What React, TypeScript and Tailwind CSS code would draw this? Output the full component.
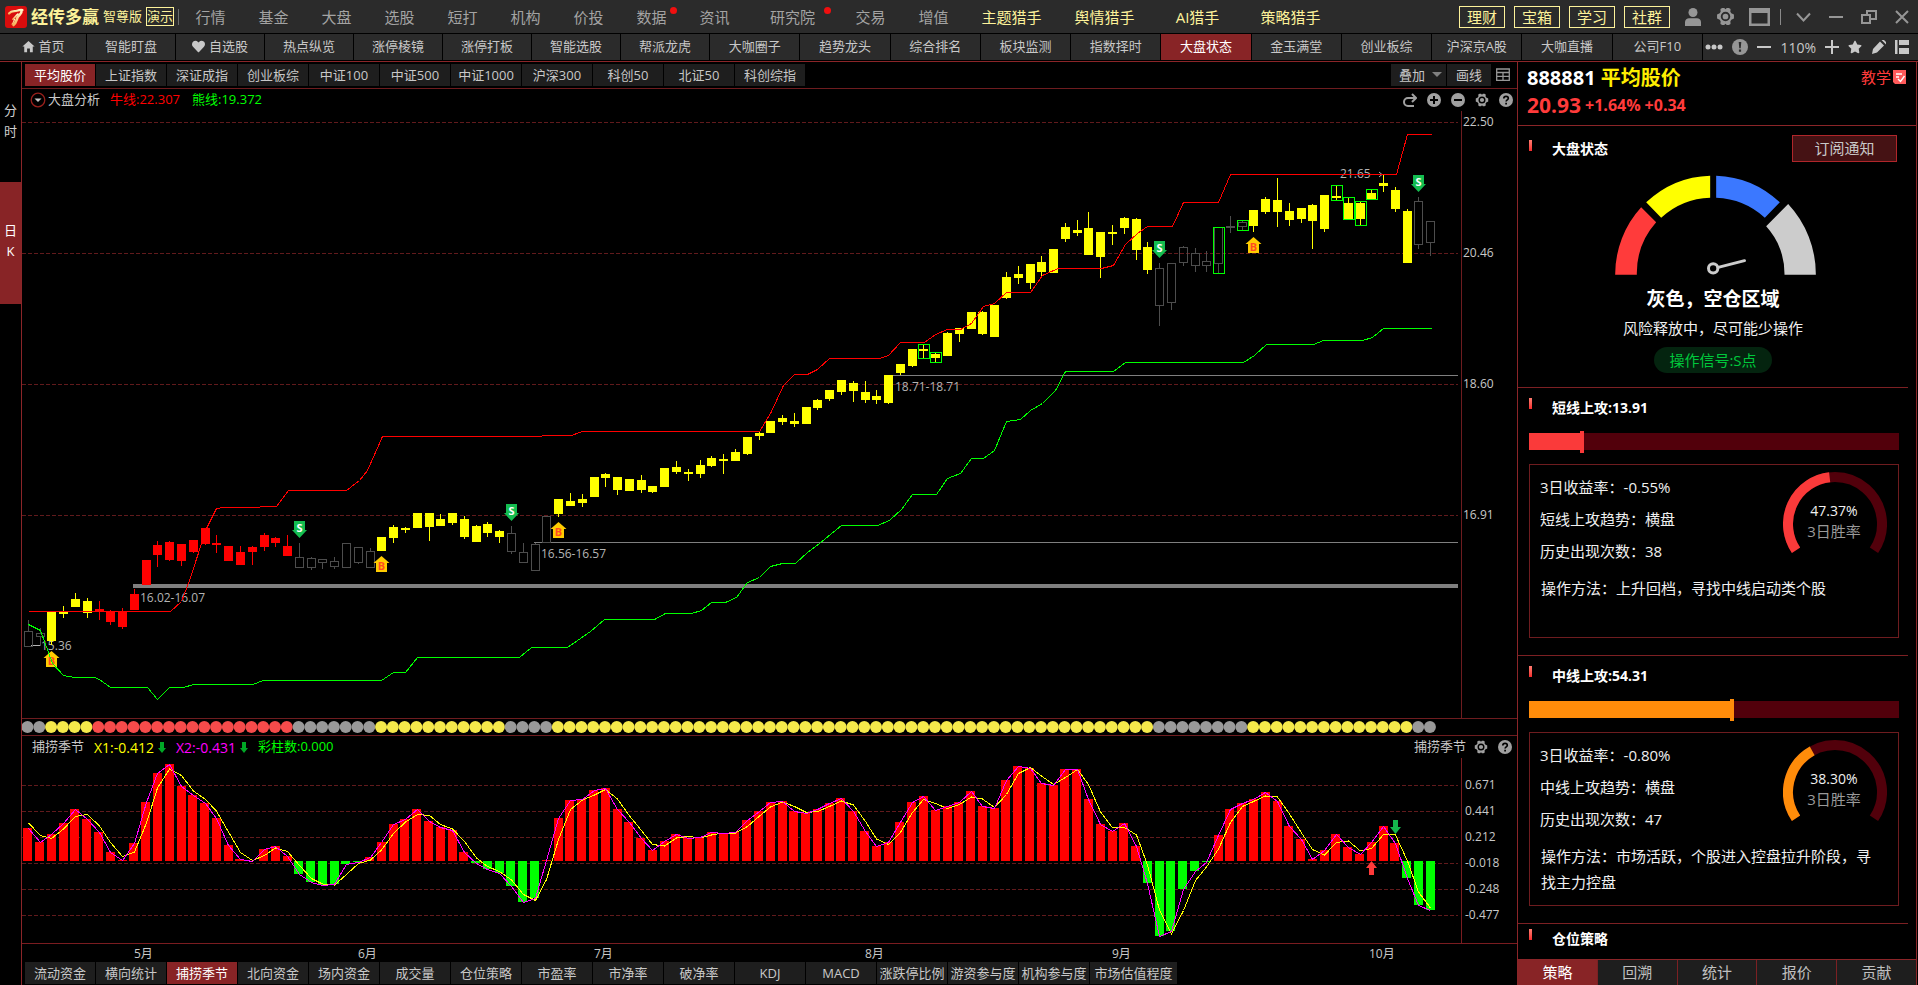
import React from 'react';
import clsx from 'clsx';
import { FaHeart, FaStar } from 'react-icons/fa';
import { IoMdHome } from 'react-icons/io';

const MENU: { label: string; dot?: boolean; wide?: boolean; hot?: boolean }[] = [
  { label: '行情' },
  { label: '基金' },
  { label: '大盘' },
  { label: '选股' },
  { label: '短打' },
  { label: '机构' },
  { label: '价投' },
  { label: '数据', dot: true },
  { label: '资讯' },
  { label: '研究院', dot: true, wide: true },
  { label: '交易' },
  { label: '增值' },
  { label: '主题猎手', wide: true, hot: true },
  { label: '舆情猎手', wide: true, hot: true },
  { label: 'AI猎手', wide: true, hot: true },
  { label: '策略猎手', wide: true, hot: true },
];

const SHORTCUTS = [
  '智能盯盘', '自选股', '热点纵览', '涨停棱镜', '涨停打板', '智能选股', '帮派龙虎', '大咖圈子', '趋势龙头',
  '综合排名', '板块监测', '指数择时', '大盘状态', '金玉满堂', '创业板综', '沪深京A股', '大咖直播', '公司F10',
];

const INDEX_TABS = [
  '平均股价', '上证指数', '深证成指', '创业板综', '中证100', '中证500', '中证1000', '沪深300', '科创50', '北证50', '科创综指',
];

const INDICATOR_TABS = [
  '流动资金', '横向统计', '捕捞季节', '北向资金', '场内资金', '成交量', '仓位策略', '市盈率', '市净率', '破净率',
  'KDJ', 'MACD', '涨跌停比例', '游资参与度', '机构参与度', '市场估值程度',
];

const PANEL_TABS = ['策略', '回溯', '统计', '报价', '贡献'];

/* ---------- chart data ---------- */

type State = 'g' | 'y' | 'r';

// high, body top, body bottom, low
const CANDLES: [number, number, number, number][] = [
  [620, 631, 647, 647], [628, 633, 637, 646], [612, 612, 641, 645], [606, 612, 614, 618], [593, 599, 607, 607],
  [598, 601, 613, 618], [601, 609, 612, 620], [610, 611, 622, 625], [608, 611, 627, 629], [589, 594, 610, 610],
  [560, 560, 585, 585], [541, 545, 555, 567], [541, 542, 560, 561], [544, 544, 561, 566], [540, 540, 552, 553],
  [528, 528, 544, 545], [535, 543, 545, 553], [546, 546, 561, 561], [546, 552, 565, 565], [546, 547, 552, 565],
  [533, 535, 547, 551], [537, 538, 543, 547], [535, 546, 556, 556], [543, 557, 568, 568], [557, 558, 568, 570],
  [559, 559, 563, 569], [557, 561, 567, 569], [543, 543, 568, 568], [547, 547, 563, 564], [548, 551, 568, 568],
  [537, 537, 551, 551], [525, 527, 538, 543], [527, 528, 530, 533], [513, 513, 528, 528], [513, 513, 527, 541],
  [514, 519, 526, 526], [513, 513, 523, 525], [516, 519, 537, 539], [525, 526, 542, 542], [522, 524, 533, 537],
  [530, 531, 537, 543], [526, 533, 552, 554], [543, 552, 563, 563], [543, 544, 571, 571], [516, 516, 543, 543],
  [499, 499, 514, 517], [493, 501, 506, 506], [494, 499, 503, 507], [477, 477, 497, 497], [473, 474, 478, 487],
  [477, 477, 490, 495], [479, 479, 491, 491], [475, 480, 490, 493], [486, 486, 492, 493], [468, 468, 487, 487],
  [461, 467, 472, 474], [469, 472, 474, 481], [460, 465, 474, 478], [456, 458, 466, 467], [454, 459, 461, 474],
  [449, 452, 461, 461], [437, 437, 454, 455], [432, 433, 436, 440], [421, 421, 433, 433], [415, 418, 422, 425],
  [413, 421, 424, 427], [407, 407, 424, 424], [399, 400, 408, 410], [390, 390, 399, 401], [380, 380, 392, 395],
  [381, 383, 391, 402], [381, 392, 400, 403], [390, 396, 400, 404], [375, 375, 403, 404], [364, 364, 373, 375],
  [349, 349, 366, 367], [345, 349, 351, 358], [353, 354, 358, 362], [332, 333, 356, 356], [328, 328, 334, 342],
  [312, 312, 329, 329], [311, 312, 334, 335], [305, 305, 337, 337], [272, 277, 298, 299], [266, 274, 278, 284],
  [264, 264, 283, 289], [256, 262, 272, 278], [249, 249, 273, 273], [223, 227, 239, 242], [220, 230, 233, 236],
  [212, 228, 255, 255], [232, 232, 257, 278], [225, 232, 234, 245], [217, 218, 228, 234], [218, 219, 250, 260],
  [242, 247, 270, 274], [263, 268, 306, 326], [263, 263, 303, 310], [246, 247, 263, 266], [248, 253, 266, 272],
  [251, 261, 266, 272], [227, 227, 264, 273], [216, 226, 228, 233], [220, 222, 227, 230], [210, 210, 226, 232],
  [197, 199, 212, 214], [178, 200, 212, 227], [203, 211, 220, 226], [208, 208, 219, 223], [204, 205, 221, 249],
  [195, 195, 229, 232], [185, 196, 198, 200], [197, 203, 220, 220], [201, 203, 219, 225], [189, 193, 199, 199],
  [175, 183, 186, 192], [187, 190, 209, 212], [209, 211, 263, 263], [197, 201, 245, 249], [221, 221, 243, 256],
];

// runs of consecutive days in the same state
const RUNS: [State, number][] = [
  ['g', 2], ['y', 4], ['r', 17], ['g', 7], ['y', 11], ['g', 4], ['y', 51], ['g', 8], ['y', 14], ['g', 2],
];
const STATES: State[] = RUNS.flatMap(([s, n]) => Array<State>(n).fill(s));

// day index, top, bottom
const GREEN_BOXES: [number, number, number][] = [
  [76, 344, 358], [77, 352, 362], [101, 227, 273], [103, 220, 230], [111, 185, 200],
  [112, 197, 219], [113, 201, 225], [114, 189, 199],
];

const BULL_LINE =
  '28,611 170,611 181,601 189,580 206,528 216,508 223,507 259,507 260,506 276,506 288,490 346,490 359,480 367,470 382,436 541,436 542,435 571,435 582,431 759,431 770,413 783,385 794,374 807,374 817,369 829,358 879,358 888,355 900,342 924,342 935,334 947,329 960,329 971,323 983,306 994,303 1006,292 1030,292 1042,275 1053,270 1058,268 1101,268 1113,265 1125,244 1137,233 1147,226 1172,226 1183,202 1218,202 1230,174 1396,174 1407,134 1431,134';
const BEAR_LINE =
  '28,624 40,630 52,663 63,675 74,677 94,677 99,679 110,687 147,687 157,699 169,687 183,687 193,684 252,684 263,680 381,680 393,672 405,672 417,657 519,657 531,647 567,647 590,631 604,619 654,619 665,613 691,613 701,610 711,602 725,602 736,597 747,582 759,577 770,566 782,563 795,563 807,552 819,543 830,534 841,525 877,525 889,520 901,509 912,494 936,494 947,478 960,473 971,458 983,458 994,450 1006,421 1020,419 1030,410 1042,403 1055,390 1065,371 1113,371 1125,362 1243,362 1254,355 1266,344 1313,344 1323,340 1362,340 1372,337 1383,328 1431,328';

const SEASON = [
  33, 19, 27, 38, 52, 42, 29, 9, 1, 18, 59, 88, 97, 75, 66, 58, 43, 16, 2, 0, 12, 15, 5, -13, -21, -24, -23, -3, -1, 4,
  19, 37, 42, 52, 40, 34, 31, 9, -2, -8, -12, -25, -41, -37, 1, 43, 61, 62, 71, 73, 52, 39, 23, 11, 20, 27, 23, 24, 29, 28,
  29, 41, 50, 59, 60, 50, 48, 52, 58, 63, 50, 30, 15, 19, 39, 59, 65, 51, 55, 59, 70, 55, 53, 81, 95, 93, 78, 76, 92, 92,
  62, 37, 30, 38, 15, -22, -75, -70, -28, -10, -1, 26, 52, 58, 62, 69, 60, 35, 22, 2, 11, 27, 14, 7, 19, 35, 18, -17, -44, -49,
];

const STEP = 11.785;
const centerOf = (i: number) => Math.floor(28.33 + STEP * i);
const ZERO = 861;

const CANDLE_COLOR: Record<State, string> = { g: '#4d4d4d', y: '#ffff00', r: '#ff0000' };
const DOT_COLOR: Record<State, string> = { g: '#999999', y: '#f5e94b', r: '#f64b4b' };

/* ---------- icons ---------- */

const Gear: React.FC<{ className?: string; hole?: string }> = ({ className, hole = '#000000' }) => (
  <svg viewBox="0 0 18 18" className={className} aria-hidden="true">
    <path
      fill="currentColor"
      d="M5.800 1h2l1.200 1.200L10.200 1h2l1.600 1-.2 2.400.9 1.500L17 7v4l-2.500 1.100-.9 1.500.2 2.400-1.600 1h-2L9 15.800 7.800 17h-2L4.200 16l.2-2.400-.9-1.500L1 11V7l2.500-1.100.9-1.500L4.200 2z"
    />
    <circle cx="9" cy="9" r="3.600" fill="none" stroke={hole} strokeWidth="1.800" />
  </svg>
);

const Question: React.FC = () => (
  <svg viewBox="0 0 14 14" className="size-3.5" aria-hidden="true">
    <circle cx="7" cy="7" r="7" fill="currentColor" />
    <path d="M4.800 5.500C4.800 2.600 9.300 2.600 9.300 5.300 9.300 6.900 7.100 6.900 7.100 8.600M7.100 9.800v1.700" fill="none" stroke="#000" strokeWidth="1.700" />
  </svg>
);

const Logo: React.FC = () => (
  <svg viewBox="0 0 22 22" className="size-[22px]" aria-hidden="true">
    <defs>
      <linearGradient id="logo-stroke" x1="0" y1="0" x2="0" y2="1">
        <stop offset="0" stopColor="#fff6c8" />
        <stop offset="1" stopColor="#f7b35c" />
      </linearGradient>
    </defs>
    <rect width="22" height="22" rx="3" fill="#d90d0d" />
    <g fill="none" stroke="url(#logo-stroke)" strokeLinecap="round">
      <path d="M4 7.500C7 4.200 9.500 5.800 12 4.800c2-.8 3.500-1.300 5.500-.8" strokeWidth="2.200" />
      <path d="M16.500 5C17 8 14 8.500 12.500 11.500 11.500 14 11 17 8.500 19" strokeWidth="2.600" />
      <path d="M13 8C11 9 10.500 11.500 8 13.200" strokeWidth="1.600" />
      <path d="M9.500 13.500C8.500 15.500 8.500 17 7 18.200" strokeWidth="1.200" />
    </g>
  </svg>
);

const DownArrow: React.FC = () => (
  <svg viewBox="0 0 8 11" className="ml-1 h-[11px] w-2" aria-hidden="true">
    <path d="M2 0h4v6h2L4 11 0 6h2z" fill="#00a826" />
  </svg>
);

/* ---------- top bars ---------- */

const TitleBar: React.FC = () => (
  <header className="flex h-[34px] items-center justify-between border-b border-black bg-[#2b2b2b]">
    <div className="flex items-center pl-[5px]">
      <Logo />
      <span className="ml-1 w-[68px] text-[17px] leading-6 font-bold text-[#fdf29a]">经传多赢</span>
      <span className="ml-1 text-[13px] text-[#fdf29a]">智尊版</span>
      <span className="ml-1 border border-[#fdf29a] text-[13px] leading-[17px] text-[#fdf29a]">演示</span>
      <span className="ml-1 h-4 w-px bg-[#6b6b6b]" />
      <nav className="flex">
        {MENU.map((m) => (
          <button
            key={m.label}
            className={clsx(
              'relative shrink-0 text-[15px] leading-6',
              m.wide ? 'w-[93px]' : 'w-[63px]',
              m.hot ? 'text-[#fdf29a]' : 'text-[#a3a3a3]',
            )}
          >
            {m.label}
            {m.dot && (
              <span className={clsx('absolute top-0.5 size-[7px] rounded-full bg-[#f00f0f]', m.wide ? 'right-2' : 'right-1.5')} />
            )}
          </button>
        ))}
      </nav>
    </div>
    <div className="flex items-center pr-[9px] text-[#969696]">
      <div className="flex gap-[9px]">
        {['理财', '宝箱', '学习', '社群'].map((t) => (
          <button key={t} className="h-[22px] w-[46px] border border-[#fdf29a] text-[15px] leading-5 text-[#fdf29a]">
            {t}
          </button>
        ))}
      </div>
      <button aria-label="用户" className="ml-3.5">
        <svg viewBox="0 0 18 18" className="size-[18px]">
          <circle cx="9" cy="4.500" r="4.500" fill="currentColor" />
          <path d="M1 18v-4c0-2.500 2-3.800 4-3.800h8c2 0 4 1.300 4 3.800v4z" fill="currentColor" />
        </svg>
      </button>
      <button aria-label="设置" className="ml-3.5">
        <Gear className="size-[19px]" hole="#2b2b2b" />
      </button>
      <button aria-label="窗口" className="ml-3.5">
        <svg viewBox="0 0 21 18" className="h-[18px] w-[21px]">
          <path d="M0 0h21v18H0zM2.500 5v10.500h16V5z" fill="currentColor" fillRule="evenodd" />
        </svg>
      </button>
      <span className="ml-2.5 h-4 w-px bg-[#8a8a8a]" />
      <button aria-label="展开" className="ml-[15px]">
        <svg viewBox="0 0 15 10" className="h-2.5 w-[15px]"><path d="M1 1.500l6.500 7 6.500-7" fill="none" stroke="currentColor" strokeWidth="2" /></svg>
      </button>
      <button aria-label="最小化" className="ml-[18px]">
        <svg viewBox="0 0 14 14" className="size-3.5"><path d="M0 7h14" stroke="currentColor" strokeWidth="2" /></svg>
      </button>
      <button aria-label="还原" className="ml-[18px]">
        <svg viewBox="0 0 16 14" className="h-3.5 w-4"><path d="M1 5h8v8H1zM6 5V1h9v8h-5" fill="none" stroke="currentColor" strokeWidth="2" /></svg>
      </button>
      <button aria-label="关闭" className="ml-[18px]">
        <svg viewBox="0 0 14 14" className="size-3.5"><path d="M1 1l12 12M13 1L1 13" stroke="currentColor" strokeWidth="2" /></svg>
      </button>
    </div>
  </header>
);

const ShortcutBar: React.FC = () => (
  <nav className="flex h-7 gap-px border-b border-[#8b2528] bg-black pb-px text-[13px] text-[#c8c8c8]">
    <button className="flex w-[86px] shrink-0 items-center justify-center gap-0.5 bg-[#2b2b2b] pb-px">
      <IoMdHome className="size-[15px]" /> 首页
    </button>
    {SHORTCUTS.map((s, i) => (
      <button
        key={s}
        className={clsx(
          'flex items-center justify-center gap-1 pb-px whitespace-nowrap',
          i < 7 ? 'w-[88px]' : 'min-w-0 flex-1',
          s === '大盘状态' ? 'bg-[#882426] text-white' : 'bg-[#2b2b2b]',
        )}
      >
        {s === '自选股' && <FaHeart className="size-[13px]" />}
        {s}
      </button>
    ))}
    <div className="flex w-[215px] shrink-0 items-center justify-between bg-[#2b2b2b] pr-[9px] pl-0.5">
      <button aria-label="更多">
        <svg viewBox="0 0 18 6" className="h-1.5 w-[18px] fill-current">
          <circle cx="3" cy="3" r="2.500" /><circle cx="9" cy="3" r="2.500" /><circle cx="15" cy="3" r="2.500" />
        </svg>
      </button>
      <button aria-label="提示" className="text-[#969696]">
        <svg viewBox="0 0 16 16" className="size-4">
          <circle cx="8" cy="8" r="8" fill="currentColor" />
          <path d="M6.700 3h2.600L8.700 9.200H7.300zM6.900 10.500h2.200v2.200H6.900z" fill="#2b2b2b" />
        </svg>
      </button>
      <button aria-label="缩小">
        <svg viewBox="0 0 14 14" className="size-3.5"><path d="M0 7h14" stroke="currentColor" strokeWidth="2" /></svg>
      </button>
      <span className="text-[14px]">110%</span>
      <button aria-label="放大">
        <svg viewBox="0 0 14 14" className="size-3.5"><path d="M0 7h14M7 0v14" stroke="currentColor" strokeWidth="2" /></svg>
      </button>
      <button aria-label="收藏"><FaStar className="size-3.5" /></button>
      <button aria-label="编辑">
        <svg viewBox="0 0 14 14" className="size-3.5 fill-current"><path d="M8 1.500L12 5.500 5 12.500 0 14 1 9zM9.500 0h2.500l2 2v2.500z" /></svg>
      </button>
      <button aria-label="布局">
        <svg viewBox="0 0 14 14" className="size-3.5 fill-current"><path d="M0 0h2.500v14H0zM4 0h10v5H4zM4 8h10v6H4z" /></svg>
      </button>
    </div>
  </nav>
);

const SideRail: React.FC = () => (
  <nav className="flex w-[22px] shrink-0 flex-col border-r border-[#8b2528] text-[13px] leading-[21px] text-[#d0d0d0]">
    <button className="h-[120px] w-full px-1 pb-0.5">分时</button>
    <button className="h-[122px] w-full bg-[#882426] px-1 pb-1 text-white">日 K</button>
  </nav>
);

/* ---------- charts ---------- */

const Grid: React.FC<{ rows: [number, string][]; labelX: number }> = ({ rows, labelX }) => (
  <g>
    {rows.map(([y, label]) => (
      <g key={label}>
        <line x1="22" x2="1458" y1={y + 0.5} y2={y + 0.5} stroke="#611a1c" strokeDasharray="4 2" shapeRendering="crispEdges" />
        <text x={labelX} y={y + 4} className="fill-[#c8c8c8] text-[12px]">{label}</text>
      </g>
    ))}
  </g>
);

const SellMark: React.FC<{ x: number; y: number }> = ({ x, y }) => (
  <g>
    <path d={`M${x - 5} ${y}h11v9h2l-7.500 8-7.500-8h2z`} fill="#14bd50" />
    <text x={x + 0.5} y={y + 11} textAnchor="middle" className="fill-white text-[11px] font-bold">S</text>
  </g>
);

const BuyMark: React.FC<{ x: number; y: number }> = ({ x, y }) => (
  <g>
    <path d={`M${x + 0.5} ${y}l8 7h-2.500v9h-11v-9h-2.500z`} fill="#ffcc00" />
    <text x={x + 0.5} y={y + 14} textAnchor="middle" className="fill-[#ff4a22] text-[11px] font-bold">B</text>
  </g>
);

const GAPS = [
  { x: 133, y: 584, h: 4, label: '16.02-16.07', tx: 140, ty: 602 },
  { x: 534, y: 542, h: 1, label: '16.56-16.57', tx: 541, ty: 558 },
  { x: 889, y: 375, h: 1, label: '18.71-18.71', tx: 895, ty: 391 },
];

const PriceChart: React.FC = () => (
  <svg viewBox="22 111 1495 607" className="block w-full" role="img" aria-label="大盘分析">
    <Grid rows={[[122, '22.50'], [253, '20.46'], [384, '18.60'], [515, '16.91']]} labelX={1463} />
    <line x1="1461.500" x2="1461.500" y1="111" y2="718" stroke="#6e1c1f" />
    {GAPS.map((g) => (
      <g key={g.label}>
        <rect x={g.x} y={g.y} width={1458 - g.x} height={g.h} fill="#7f7f7f" />
        <text x={g.tx} y={g.ty} className="fill-[#b4b4b4] text-[12px]">{g.label}</text>
      </g>
    ))}
    <text x="41" y="650" className="fill-[#b4b4b4] text-[12px]">15.36</text>
    <path d="M31 645.500h9" stroke="#b4b4b4" />
    <text x="1340" y="178" className="fill-[#b4b4b4] text-[12px]">21.65</text>
    <path d="M1379 172l3 2.500-3 2.500" fill="none" stroke="#b4b4b4" />
    <g shapeRendering="crispEdges">
      {CANDLES.map(([high, top, bottom, low], i) => {
        const c = centerOf(i);
        const color = CANDLE_COLOR[STATES[i]];
        return STATES[i] === 'g' ? (
          <path
            key={i}
            d={`M${c + 0.5} ${high}V${top}M${c + 0.5} ${bottom}V${low}M${c - 3.5} ${top + 0.5}h8V${bottom - 0.5}h-8z`}
            fill="none"
            stroke={color}
          />
        ) : (
          <path key={i} d={`M${c} ${high}h1V${top}h4V${bottom}h-4V${low}h-1V${bottom}h-4V${top}h4z`} fill={color} />
        );
      })}
      {GREEN_BOXES.map(([i, top, bottom]) => (
        <rect key={i} x={centerOf(i) - 4.5} y={top + 0.5} width="11" height={bottom - top} fill="none" stroke="#00ff00" />
      ))}
    </g>
    <SellMark x={299} y={521} />
    <SellMark x={511} y={504} />
    <SellMark x={1159} y={241} />
    <SellMark x={1418} y={175} />
    <BuyMark x={51} y={651} />
    <BuyMark x={381} y={556} />
    <BuyMark x={558} y={522} />
    <BuyMark x={1253} y={237} />
    <g fill="none" shapeRendering="crispEdges" transform="translate(0.5 0.5)">
      <polyline points={BULL_LINE} stroke="#ff0000" />
      <polyline points={BEAR_LINE} stroke="#00ff00" />
    </g>
  </svg>
);

const StateStrip: React.FC = () => (
  <svg viewBox="22 719 1495 16" className="block w-full" role="img" aria-label="状态">
    {STATES.map((s, i) => (
      <circle key={i} cx={27.5 + STEP * i} cy="727" r="6" fill={DOT_COLOR[s]} />
    ))}
  </svg>
);

const seasonPoints = (values: number[]) => values.map((v, i) => `${centerOf(i)},${ZERO - v}`).join(' ');
const SMOOTHED = SEASON.map((v, i) => (v + (i ? SEASON[i - 1] : 44)) / 2);

const MONTHS: [number, string][] = [
  [134, '5月'], [358, '6月'], [594, '7月'], [865, '8月'], [1112, '9月'], [1369, '10月'],
];

const SeasonChart: React.FC = () => (
  <svg viewBox="22 758 1495 204" className="block w-full" role="img" aria-label="捕捞季节">
    <Grid
      rows={[[785, '0.671'], [811, '0.441'], [837, '0.212'], [863, '-0.018'], [889, '-0.248'], [915, '-0.477']]}
      labelX={1465}
    />
    <path d="M1461.500 758V943M22 943.500H1517" stroke="#7a1c20" fill="none" />
    {SEASON.map((v, i) => (
      <rect
        key={i}
        x={Math.round(23.3 + STEP * i)}
        y={v > 0 ? ZERO - v : ZERO}
        width="9"
        height={Math.abs(v)}
        fill={v > 0 ? '#ff0000' : '#00ff00'}
      />
    ))}
    <g fill="none" shapeRendering="crispEdges" transform="translate(0.5 0.5)">
      <polyline points={seasonPoints(SMOOTHED)} stroke="#ffff00" />
      <polyline points={seasonPoints(SEASON)} stroke="#ff00ff" />
    </g>
    <path d="M1393 820h5v7h3l-5.500 7-5.500-7h3z" fill="#14b84c" />
    <path d="M1371.500 861l5.500 7h-3v7h-5v-7h-3z" fill="#ff3a3a" />
    {MONTHS.map(([x, label]) => (
      <text key={label} x={x} y="958" className="fill-[#c8c8c8] text-[12px]">{label}</text>
    ))}
  </svg>
);

const ChartArea: React.FC = () => (
  <section className="flex min-w-0 flex-1 flex-col text-[13px] text-[#c8c8c8]">
    <div className="flex h-[27px] items-center justify-between border-b border-[#6e1c1f] pr-[7px] pb-px pl-[3px]">
      <div className="flex gap-px">
        {INDEX_TABS.map((t, i) => (
          <button key={t} className={clsx('h-[22px] w-[70px] leading-[22px]', i === 0 ? 'bg-[#882426] text-white' : 'bg-[#1e1e1e]')}>
            {t}
          </button>
        ))}
      </div>
      <div className="flex items-center gap-px">
        <label className="relative block h-[22px] w-[55px] bg-[#1e1e1e]">
          <select aria-label="叠加" className="block h-full w-full appearance-none bg-[#1e1e1e] pl-2 leading-[22px] outline-none">
            <option>叠加</option>
          </select>
          <svg viewBox="0 0 10 5" className="pointer-events-none absolute top-2 right-1 h-[5px] w-2.5"><path d="M0 0h10L5 5z" fill="#808080" /></svg>
        </label>
        <button className="h-[22px] w-11 bg-[#1e1e1e] leading-[22px]">画线</button>
        <button aria-label="表格" className="ml-1 text-[#969696]">
          <svg viewBox="0 0 14 13" className="h-[13px] w-3.5">
            <path d="M.7 1h12.600v11.300H.7zM.7 4.500h12.600M.7 8.300h12.600M7 4.500v7.500" fill="none" stroke="currentColor" strokeWidth="1.300" />
          </svg>
        </button>
      </div>
    </div>

    <div className="flex h-[22px] items-center justify-between pr-1 pl-2">
      <div className="flex items-center">
        <button aria-label="收起指标">
          <svg viewBox="0 0 16 16" className="size-4">
            <circle cx="8" cy="8" r="6.800" fill="none" stroke="#98201c" strokeWidth="1.300" />
            <path d="M4.500 6.500h7L8 10z" fill="#c8c8c8" />
          </svg>
        </button>
        <span className="ml-0.5">大盘分析</span>
        <span className="ml-2.5 text-[#ff0000]">牛线:22.307</span>
        <span className="ml-3 text-[#00ff00]">熊线:19.372</span>
      </div>
      <div className="flex items-center gap-2.5 text-[#a0a0a0]">
        <button aria-label="重做">
          <svg viewBox="0 0 14 14" className="size-3.5">
            <path d="M12 5H5a3.500 3.500 0 0 0 0 8h6M9 1l4 4-4 4" fill="none" stroke="currentColor" strokeWidth="2" />
          </svg>
        </button>
        <button aria-label="放大图表">
          <svg viewBox="0 0 14 14" className="size-3.5">
            <circle cx="7" cy="7" r="7" fill="currentColor" />
            <path d="M3 7h8M7 3v8" stroke="#000" strokeWidth="2" />
          </svg>
        </button>
        <button aria-label="缩小图表">
          <svg viewBox="0 0 14 14" className="size-3.5">
            <circle cx="7" cy="7" r="7" fill="currentColor" />
            <path d="M3 7h8" stroke="#000" strokeWidth="2" />
          </svg>
        </button>
        <button aria-label="指标设置"><Gear className="size-3.5" /></button>
        <button aria-label="指标帮助"><Question /></button>
      </div>
    </div>
    <PriceChart />

    <div className="border-y border-[#6e1c1f]">
      <StateStrip />
    </div>

    <div className="flex h-[22px] items-center justify-between pr-[5px] pl-2.5">
      <div className="flex items-center">
        <span>捕捞季节</span>
        <span className="ml-2.5 flex items-center text-[14px] text-[#ffff00]">X1:-0.412<DownArrow /></span>
        <span className="ml-2.5 flex items-center text-[14px] text-[#ff00ff]">X2:-0.431<DownArrow /></span>
        <span className="ml-2.5 text-[#00ff00]">彩柱数:0.000</span>
      </div>
      <div className="flex items-center text-[#a0a0a0]">
        <span className="text-[#c8c8c8]">捕捞季节</span>
        <button aria-label="副图设置" className="ml-2"><Gear className="size-3.5" /></button>
        <button aria-label="副图帮助" className="ml-2.5"><Question /></button>
      </div>
    </div>
    <SeasonChart />

    <div className="flex gap-px pl-[3px]">
      {INDICATOR_TABS.map((t) => (
        <button
          key={t}
          className={clsx(
            'h-[22px] leading-[22px] whitespace-nowrap',
            t.length > 5 ? 'w-[87px]' : 'w-[70px]',
            t === '捕捞季节' ? 'bg-[#882426] text-white' : 'bg-[#1e1e1e]',
          )}
        >
          {t}
        </button>
      ))}
    </div>
  </section>
);

/* ---------- strategy panel ---------- */

const Tick: React.FC = () => <span className="h-[11px] w-[3px] shrink-0 bg-linear-to-b from-[#ff7b70] to-[#f5282c]" />;

const StateGauge: React.FC = () => (
  <svg viewBox="300 160 620 312" className="mx-auto mt-[11px] block h-[104px] w-[207px]" role="img" aria-label="灰色">
    <path d="M315 465A294 297 0 0 1 393 263L438 308A229 229 0 0 0 380 465z" fill="#ff3b3b" />
    <path d="M408 248A294 297 0 0 1 600 168V234A229 229 0 0 0 453 294z" fill="#ffff00" />
    <path d="M618 168A294 297 0 0 1 809 248L764 294A229 229 0 0 0 618 234z" fill="#3b78ff" />
    <path d="M834 253A308 308 0 0 1 917 465H823A214 214 0 0 0 768 320z" fill="#cccccc" />
    <circle cx="609" cy="446" r="14" fill="none" stroke="#cccccc" strokeWidth="9" />
    <path d="M624 443L703 423" stroke="#cccccc" strokeWidth="9" strokeLinecap="round" />
  </svg>
);

const RING_START = 146;
const RING_SWEEP = 248;
const ringPoint = (deg: number) => {
  const rad = (deg * Math.PI) / 180;
  return `${52 + 47 * Math.cos(rad)} ${52 + 47 * Math.sin(rad)}`;
};
const ringArc = (sweep: number) =>
  `M${ringPoint(RING_START)}A47 47 0 ${sweep > 180 ? 1 : 0} 1 ${ringPoint(RING_START + sweep)}`;

const WinRing: React.FC<{ rate: number; color: string }> = ({ rate, color }) => (
  <svg viewBox="0 0 104 104" className="mt-px size-[104px] shrink-0" role="img" aria-label="3日胜率">
    <path d={ringArc(RING_SWEEP)} fill="none" stroke="#52000b" strokeWidth="10" />
    <path d={ringArc((RING_SWEEP * rate) / 100)} fill="none" stroke={color} strokeWidth="10" />
    <text x="51" y="44" textAnchor="middle" className="fill-[#f0f0f0] text-[14px]">{`${rate.toFixed(2)}%`}</text>
    <text x="51" y="65" textAnchor="middle" className="fill-[#999999] text-[15px]">3日胜率</text>
  </svg>
);

const AttackSection: React.FC<{
  name: string;
  score: number;
  yieldRate: string;
  trend: string;
  times: number;
  method: string;
  winRate: number;
  color: string;
}> = ({ name, score, yieldRate, trend, times, method, winRate, color }) => (
  <section className="mr-2 border-b border-[#7c2023] pt-2.5 pr-[9px] pb-[17px] pl-[11px]">
    <div className="flex">
      <Tick />
      <h2 className="ml-5 text-[14px] leading-5 font-bold text-white">{`${name}:${score.toFixed(2)}`}</h2>
    </div>
    <div className="relative mt-[15px] h-[17px] bg-[#52000b]">
      <div className="h-full" style={{ width: `${score}%`, background: color }} />
      <span className="absolute -top-0.5 h-[22px] w-1" style={{ left: `${score}%`, background: color }} />
    </div>
    <div className="mt-3.5 min-h-[174px] border border-[#6e1c1f] pt-1.5 pl-2.5 text-[15px] text-[#f0f0f0]">
      <div className="flex justify-between pr-[11px]">
        <div className="leading-8">
          <p>{`3日收益率：${yieldRate}`}</p>
          <p>{`${name}趋势：${trend}`}</p>
          <p>{`历史出现次数：${times}`}</p>
        </div>
        <WinRing rate={winRate} color={color} />
      </div>
      <p className="-mt-px ml-px pr-[15px] pb-2.5 leading-[26px]">{`操作方法：${method}`}</p>
    </div>
  </section>
);

const StrategyPanel: React.FC = () => (
  <aside className="mr-px flex w-[400px] shrink-0 flex-col border-x border-[#8b2528]">
    <div className="flex h-16 justify-between border-b border-[#8b2528] pt-[3px] pr-2.5 pl-[9px]">
      <div>
        <h1 className="text-[20px] leading-[26px] font-bold text-white">
          888881 <span className="text-[#ffee00]">平均股价</span>
        </h1>
        <p className="flex items-center gap-1 leading-7 font-bold text-[#ff3b3b]">
          <span className="text-[21px]">20.93</span>
          <span className="text-[16px]">+1.64%</span>
          <span className="text-[16px]">+0.34</span>
        </p>
      </div>
      <a href="#" className="flex h-6 items-center gap-0.5 text-[15px] text-[#ff3b3b]">
        教学
        <svg viewBox="0 0 13 14" className="h-3.5 w-[13px]" aria-hidden="true">
          <path d="M0 0h13v14H2L0 12z" fill="#ff5a5a" />
          <path d="M3 4h6M3 7h3M5 9l2.500 2.500L11.500 6" fill="none" stroke="#fff" strokeWidth="1.400" />
        </svg>
      </a>
    </div>

    <section className="mr-2 border-b border-[#7c2023] pt-[9px] pr-[11px] pb-3.5 pl-[11px] text-center">
      <div className="flex">
        <span className="flex pt-[5px]"><Tick /></span>
        <h2 className="ml-5 pt-1 text-[14px] leading-5 font-bold text-white">大盘状态</h2>
        <button className="ml-auto h-[27px] w-[105px] border border-[#b0262a] bg-[#451214] text-[15px] leading-[25px] text-[#c8c8c8]">
          订阅通知
        </button>
      </div>
      <StateGauge />
      <p className="mt-[9px] text-[19px] leading-[26px] font-bold text-white">灰色，空仓区域</p>
      <p className="mt-1 text-[15px] leading-6 text-[#f0f0f0]">风险释放中，尽可能少操作</p>
      <p className="mx-auto mt-[7px] w-[118px] rounded-full bg-[#04240f] text-[15px] leading-[26px] text-[#00c83c]">
        操作信号:S点
      </p>
    </section>

    <AttackSection
      name="短线上攻"
      score={13.91}
      yieldRate="-0.55%"
      trend="横盘"
      times={38}
      method="上升回档，寻找中线启动类个股"
      winRate={47.37}
      color="#fa3a3a"
    />
    <AttackSection
      name="中线上攻"
      score={54.31}
      yieldRate="-0.80%"
      trend="横盘"
      times={47}
      method="市场活跃，个股进入控盘拉升阶段，寻找主力控盘"
      winRate={38.3}
      color="#ff8c0a"
    />

    <div className="flex pt-[5px] pl-[11px]">
      <Tick />
      <h2 className="ml-5 text-[14px] leading-5 font-bold text-white">仓位策略</h2>
    </div>

    <div className="mt-auto flex divide-x divide-[#7c2023] border-t border-[#8b2528] text-[15px] leading-[25px] text-[#c0c0c0]">
      {PANEL_TABS.map((t, i) => (
        <button key={t} className={clsx('flex-1', i === 0 ? 'bg-[#882426] text-white' : 'bg-[#1e1e1e]')}>{t}</button>
      ))}
    </div>
  </aside>
);

const App: React.FC = () => (
  <div className="flex min-h-screen flex-col bg-black font-['Open_Sans','Noto_Sans_CJK_SC',sans-serif]">
    <TitleBar />
    <ShortcutBar />
    <main className="flex flex-1">
      <SideRail />
      <ChartArea />
      <StrategyPanel />
    </main>
  </div>
);

export default App;
